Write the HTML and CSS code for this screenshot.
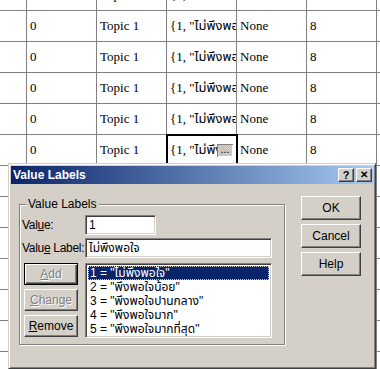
FILE: index.html
```html
<!DOCTYPE html>
<html lang="th">
<head>
    <meta charset="UTF-8">
    <title>Value Labels</title>
    <link rel="stylesheet" href="styles.css">
</head>
<body>
    <div class="sheet">
        <div class="row"><div class="cell"></div><div class="cell">0</div><div class="cell">Topic 1</div><div class="cell">{1, "ไม่พึงพอใจ"}...</div><div class="cell">None</div><div class="cell">8</div><div class="cell">1</div></div>
        <div class="row"><div class="cell"></div><div class="cell">0</div><div class="cell">Topic 1</div><div class="cell">{1, "ไม่พึงพอใจ"}...</div><div class="cell">None</div><div class="cell">8</div><div class="cell">1</div></div>
        <div class="row"><div class="cell"></div><div class="cell">0</div><div class="cell">Topic 1</div><div class="cell">{1, "ไม่พึงพอใจ"}...</div><div class="cell">None</div><div class="cell">8</div><div class="cell">1</div></div>
        <div class="row"><div class="cell"></div><div class="cell">0</div><div class="cell">Topic 1</div><div class="cell">{1, "ไม่พึงพอใจ"}...</div><div class="cell">None</div><div class="cell">8</div><div class="cell">1</div></div>
        <div class="row"><div class="cell"></div><div class="cell">0</div><div class="cell">Topic 1</div><div class="cell">{1, "ไม่พึงพอใจ"}...</div><div class="cell">None</div><div class="cell">8</div><div class="cell">1</div></div>
        <div class="row">
            <div class="cell"></div><div class="cell">0</div><div class="cell">Topic 1</div>
            <div class="cell current"><span class="clip">{1, "ไม่พึงพอใจ"}...</span><span class="ellipsis">...</span></div>
            <div class="cell">None</div><div class="cell">8</div><div class="cell">1</div>
        </div>
        <div class="row"><div class="cell"></div><div class="cell"></div><div class="cell"></div><div class="cell"></div><div class="cell"></div><div class="cell"></div><div class="cell"></div></div>
        <div class="row"><div class="cell"></div><div class="cell"></div><div class="cell"></div><div class="cell"></div><div class="cell"></div><div class="cell"></div><div class="cell"></div></div>
        <div class="row"><div class="cell"></div><div class="cell"></div><div class="cell"></div><div class="cell"></div><div class="cell"></div><div class="cell"></div><div class="cell"></div></div>
        <div class="row"><div class="cell"></div><div class="cell"></div><div class="cell"></div><div class="cell"></div><div class="cell"></div><div class="cell"></div><div class="cell"></div></div>
        <div class="row"><div class="cell"></div><div class="cell"></div><div class="cell"></div><div class="cell"></div><div class="cell"></div><div class="cell"></div><div class="cell"></div></div>
        <div class="row"><div class="cell"></div><div class="cell"></div><div class="cell"></div><div class="cell"></div><div class="cell"></div><div class="cell"></div><div class="cell"></div></div>
        <div class="row"><div class="cell"></div><div class="cell"></div><div class="cell"></div><div class="cell"></div><div class="cell"></div><div class="cell"></div><div class="cell"></div></div>
    </div>

    <div class="dialog">
        <div class="titlebar">
            <span class="title">Value Labels</span>
            <span class="tbtn">?</span>
            <span class="tbtn close">✕</span>
        </div>
        <div class="dlg-body">
            <fieldset class="group">
                <legend>Value Labels</legend>
                <div class="field">
                    <label>Val<u>u</u>e:</label>
                    <div class="input short">1</div>
                </div>
                <div class="field">
                    <label>Valu<u>e</u> Label:</label>
                    <div class="input">ไม่พึงพอใจ</div>
                </div>
                <div class="list-row">
                    <div class="btn-col">
                        <div class="btn small default disabled"><u>A</u>dd</div>
                        <div class="btn small disabled"><u>C</u>hange</div>
                        <div class="btn small"><u>R</u>emove</div>
                    </div>
                    <div class="listbox">
                        <div class="item selected">1 = "ไม่พึงพอใจ"</div>
                        <div class="item">2 = "พึงพอใจน้อย"</div>
                        <div class="item">3 = "พึงพอใจปานกลาง"</div>
                        <div class="item">4 = "พึงพอใจมาก"</div>
                        <div class="item">5 = "พึงพอใจมากที่สุด"</div>
                    </div>
                </div>
            </fieldset>
            <div class="side">
                <div class="btn">OK</div>
                <div class="btn">Cancel</div>
                <div class="btn">Help</div>
            </div>
        </div>
    </div>
</body>
</html>
```

FILE: styles.css
```css
body {
    margin: 0;
    height: 369px;
    overflow: hidden;
    position: relative;
    background: #fff;
    font-family: "Liberation Serif", "Noto Sans Thai", serif;
}
.sheet {
    margin-top: -20px;
}
.row {
    display: grid;
    grid-template-columns: 27px repeat(5, 70px) 1fr;
    height: 31px;
}
.cell {
    box-sizing: border-box;
    border-right: 1px solid #808080;
    border-bottom: 1px solid #808080;
    padding: 0 3px;
    line-height: 30px;
    font-size: 13px;
    white-space: nowrap;
    overflow: hidden;
}
.cell.current {
    display: flex;
    align-items: center;
    padding-right: 3px;
    outline: 2px solid #000;
    outline-offset: -1px;
    overflow: visible;
}
.clip {
    flex: 1;
    overflow: hidden;
}
.ellipsis {
    width: 16px;
    height: 13px;
    line-height: 10px;
    font-family: "Liberation Sans", sans-serif;
    font-size: 11px;
    text-align: center;
    background: repeating-conic-gradient(#d4d0c8 0 25%, #b8c0c8 0 50%) 0 0 / 2px 2px;
    box-shadow: inset 1px 1px #808080, inset -1px -1px #fff;
}

/* dialog window */
.dialog {
    position: absolute;
    left: 8px;
    top: 163px;
    width: 368px;
    height: 206px;
    box-sizing: border-box;
    padding: 2px;
    background: #d4d0c8;
    border: 1px solid;
    border-color: #d4d0c8 #404040 #404040 #d4d0c8;
    box-shadow: inset 1px 1px #fff, inset -1px -1px #808080;
    font-family: "Liberation Sans", "Noto Sans Thai", sans-serif;
    font-size: 11px;
    color: #000;
}
.titlebar {
    height: 18px;
    display: flex;
    align-items: center;
    padding: 0 1px 0 2px;
    background: linear-gradient(to right, #0a246a, #a6caf0);
}
.title {
    flex: 1;
    color: #fff;
    font-weight: bold;
    font-size: 12px;
}
.tbtn {
    width: 16px;
    height: 14px;
    box-sizing: border-box;
    margin-left: 2px;
    background: #d4d0c8;
    border: 1px solid;
    border-color: #fff #404040 #404040 #fff;
    box-shadow: inset -1px -1px #808080;
    font-weight: bold;
    font-size: 11px;
    line-height: 12px;
    text-align: center;
}
.tbtn.close {
    font-size: 10px;
}
.dlg-body {
    display: flex;
    align-items: flex-start;
    padding: 13px 0 0 8px;
}

/* group box */
.group {
    width: 266px;
    box-sizing: border-box;
    margin: 0;
    padding: 4px 12px 6px 2px;
    min-width: 0;
    border: 1px solid #808080;
    box-shadow: 1px 1px 0 #fff, inset 1px 1px 0 #fff;
}
.group legend {
    margin-left: 4px;
    padding: 0 2px;
    line-height: 14px;
    font-size: 12px;
    background: #d4d0c8;
}
.field {
    display: flex;
    align-items: center;
    margin-bottom: 3px;
}
.field label {
    width: 63px;
    font-size: 12px;
    letter-spacing: -0.3px;
    white-space: nowrap;
}
.input {
    width: 187px;
    height: 20px;
    box-sizing: border-box;
    padding: 0 3px;
    line-height: 18px;
    font-size: 12px;
    background: #fff;
    border: 1px solid;
    border-color: #808080 #fff #fff #808080;
    box-shadow: inset 1px 1px #404040, inset -1px -1px #d4d0c8;
    white-space: nowrap;
    overflow: hidden;
}
.input.short {
    width: 71px;
}
.list-row {
    display: flex;
    margin-top: 5px;
}
.btn-col {
    width: 63px;
    padding-left: 2px;
    box-sizing: border-box;
    display: flex;
    flex-direction: column;
    gap: 4px;
}
.listbox {
    width: 187px;
    height: 75px;
    box-sizing: border-box;
    padding: 2px;
    background: #fff;
    border: 1px solid;
    border-color: #808080 #fff #fff #808080;
    box-shadow: inset 1px 1px #404040, inset -1px -1px #d4d0c8;
    overflow: hidden;
    font-size: 12px;
}
.item {
    height: 14px;
    line-height: 14px;
    padding-left: 2px;
    white-space: nowrap;
}
.item.selected {
    background: #0a246a;
    color: #fff;
    outline: 1px dotted #d4d0c8;
    outline-offset: -1px;
}

/* buttons */
.btn {
    width: 60px;
    height: 24px;
    box-sizing: border-box;
    background: #d4d0c8;
    border: 1px solid;
    border-color: #fff #404040 #404040 #fff;
    box-shadow: inset -1px -1px #808080;
    text-align: center;
    line-height: 22px;
    font-size: 12px;
}
.btn.small {
    width: 54px;
    height: 22px;
    line-height: 20px;
}
.btn.default {
    border-color: #000;
    box-shadow: inset 1px 1px #fff, inset -1px -1px #404040, inset -2px -2px #808080;
}
.btn.disabled {
    color: #808080;
    text-shadow: 1px 1px #fff;
}
.side {
    display: flex;
    flex-direction: column;
    gap: 4px;
    margin: -1px 0 0 16px;
}
```
